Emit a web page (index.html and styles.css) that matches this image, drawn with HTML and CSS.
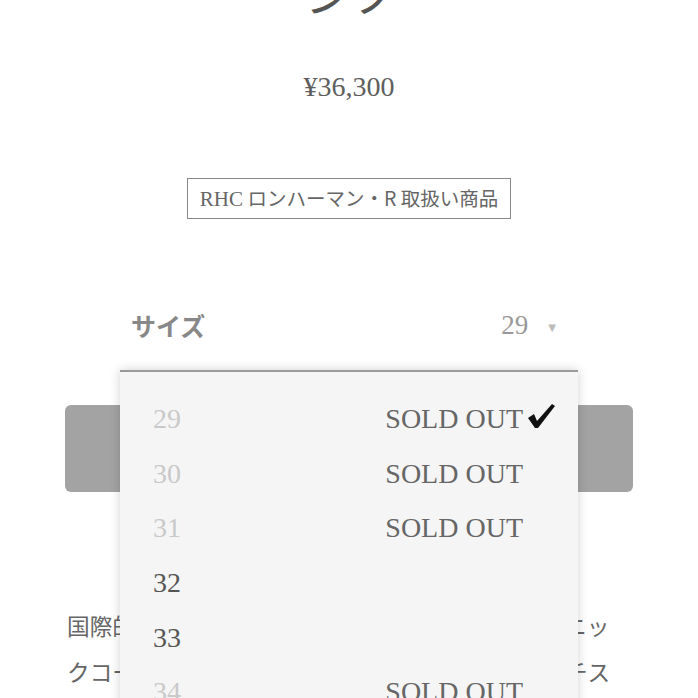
FILE: index.html
```html
<!DOCTYPE html>
<html lang="ja">
<head>
<meta charset="utf-8">
<link rel="stylesheet" href="styles.css">
</head>
<body>
<main class="page">
  <h1 class="title">ンツ</h1>
  <p class="price">¥36,300</p>
  <div class="badge-wrap"><span class="badge"><span class="latin">RHC</span> ロンハーマン・R 取扱い商品</span></div>

  <div class="size-field">
    <span class="size-label">サイズ</span>
    <span class="size-value">29<span class="caret">▼</span></span>
    <ul class="menu">
      <li class="opt off"><span class="num">29</span><span class="stock">SOLD OUT</span><span class="check"><svg width="30" height="26" viewBox="0 0 30 26"><path d="M2 15 L8 11 L11 18 L26 1 L29 3 L12 25 L9 25 Z" fill="#111"/></svg></span></li>
      <li class="opt off"><span class="num">30</span><span class="stock">SOLD OUT</span><span class="check"></span></li>
      <li class="opt off"><span class="num">31</span><span class="stock">SOLD OUT</span><span class="check"></span></li>
      <li class="opt"><span class="num">32</span><span class="stock"></span><span class="check"></span></li>
      <li class="opt"><span class="num">33</span><span class="stock"></span><span class="check"></span></li>
      <li class="opt off"><span class="num">34</span><span class="stock">SOLD OUT</span><span class="check"></span></li>
      <li class="opt"><span class="num">35</span><span class="stock"></span><span class="check"></span></li>
    </ul>
  </div>

  <div class="cart-btn"></div>

  <p class="desc">国際的なデニムブランドによる高度な加工のテクニッ<br>クコーティングを施した一本。後ろの配色ステッチス</p>
</main>
</body>
</html>
```
FILE: styles.css
```css
html, body {
  margin: 0;
  padding: 0;
  background: #fff;
  overflow: hidden;
  height: 698px;
}
.page {
  display: flex;
  flex-direction: column;
  align-items: center;
  font-family: "Liberation Serif", serif;
  color: #666;
}
.title {
  margin: -31px 0 0;
  font-family: "Noto Sans CJK JP", sans-serif;
  font-weight: 400;
  font-size: 46px;
  line-height: 46px;
  color: #555;
  letter-spacing: -2px;
}
.price {
  margin: 56px 0 0;
  font-size: 28px;
  line-height: 32px;
  color: #5e5e5e;
}
.badge-wrap {
  margin-top: 75px;
}
.badge {
  display: block;
  box-sizing: border-box;
  width: 324px;
  height: 41px;
  border: 1px solid #888;
  text-align: center;
  white-space: nowrap;
  font-family: "Noto Sans CJK JP", sans-serif;
  font-size: 19.5px;
  line-height: 38px;
  color: #666;
}
.badge .latin {
  font-family: "Liberation Serif", serif;
  font-size: 21px;
}
.size-field {
  position: relative;
  box-sizing: border-box;
  width: 458px;
  height: 40px;
  margin-top: 86px;
  padding: 0 22px 0 11px;
  display: flex;
  align-items: center;
  justify-content: space-between;
}
.size-label {
  font-family: "Noto Sans CJK JP", sans-serif;
  font-weight: 700;
  font-size: 25px;
  color: #888;
}
.size-value {
  font-size: 27px;
  color: #999;
  display: flex;
  align-items: center;
}
.caret {
  font-family: "DejaVu Sans", sans-serif;
  font-size: 10px;
  color: #bbb;
  margin-left: 20px;
  margin-top: 4px;
}
.menu {
  position: absolute;
  left: 0;
  top: 65px;
  width: 458px;
  box-sizing: border-box;
  margin: 0;
  padding: 20px 22px 0 33px;
  list-style: none;
  background: #f5f5f5;
  border-top: 2px solid #9a9a9a;
  box-shadow: 0 0 10px rgba(0, 0, 0, 0.18);
  z-index: 2;
}
.opt {
  height: 54.6px;
  display: flex;
  align-items: center;
  font-size: 28px;
}
.num {
  width: 60px;
  color: #555;
}
.opt.off .num {
  color: #c9c9c9;
}
.stock {
  flex: 1;
  text-align: right;
  color: #666;
}
.check {
  width: 33px;
  display: flex;
  justify-content: flex-end;
  align-items: center;
  margin-top: -6px;
}
.cart-btn {
  box-sizing: border-box;
  width: 568px;
  height: 87px;
  margin-top: 60px;
  background: #a3a3a3;
  border-radius: 6px;
}
.desc {
  align-self: flex-start;
  margin: 111px 0 0 67px;
  font-family: "Noto Sans CJK JP", sans-serif;
  font-size: 22.7px;
  line-height: 46px;
  color: #666;
  white-space: nowrap;
}
```
